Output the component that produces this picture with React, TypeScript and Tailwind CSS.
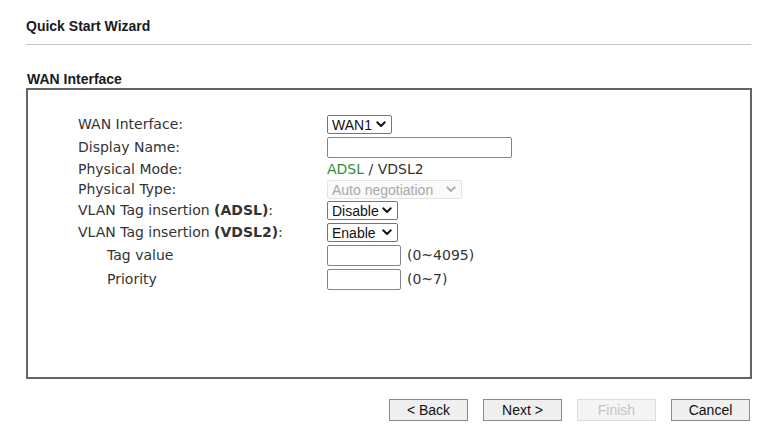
import React from "react";

const Chevron = ({ color = "#111" }: { color?: string }) => (
  <svg width="10" height="7" viewBox="0 0 10 7" className="shrink-0">
    <path d="M1.2 1.3 L5 5 L8.8 1.3" fill="none" stroke={color} strokeWidth="1.9" strokeLinecap="round" strokeLinejoin="round" />
  </svg>
);

const Select = ({ text, w, disabled = false }: { text: string; w: string; disabled?: boolean }) => (
  <div
    className={`${w} h-[19px] flex items-center justify-between pl-[4px] pr-[5px] rounded-[2px] border text-[14px] leading-none ${
      disabled ? "border-[#e3e3e3] text-[#a9a9a9] bg-[#fafafa]" : "border-[#767676] text-[#111] bg-white"
    }`}
    style={{ fontFamily: '"Liberation Sans", Arial, sans-serif' }}
  >
    <span>{text}</span>
    <Chevron color={disabled ? "#b0b0b0" : "#111"} />
  </div>
);

const Input = ({ w }: { w: string }) => (
  <div className={`${w} h-[21px] rounded-[2px] border border-[#858585] bg-white`} />
);

const Row = ({
  label,
  children,
  h,
  mt = "",
  indent = false,
}: {
  label: React.ReactNode;
  children: React.ReactNode;
  h: string;
  mt?: string;
  indent?: boolean;
}) => (
  <div className={`flex items-center ${h} ${mt}`}>
    <div className={`w-[249px] shrink-0 whitespace-nowrap ${indent ? "pl-[29px]" : ""}`}>{label}</div>
    <div className="flex items-center whitespace-nowrap">{children}</div>
  </div>
);

const Btn = ({ text, disabled = false }: { text: string; disabled?: boolean }) => (
  <div
    className={`w-[79px] h-[22px] flex items-center justify-center border text-[14px] ${
      disabled ? "border-[#dcdcdc] bg-[#f4f4f4] text-[#c4c4c4]" : "border-[#8a8a8a] bg-[#efefef] text-[#111]"
    }`}
    style={{ fontFamily: '"Liberation Sans", Arial, sans-serif' }}
  >
    {text}
  </div>
);

export default function App() {
  return (
    <div className="w-[770px] h-[430px] bg-white overflow-hidden">
      <div className="pl-[26px] pr-[18px]" style={{ fontFamily: '"Liberation Sans", Arial, sans-serif' }}>
        <div className="pt-[18px] h-[44px] text-[14px] font-bold text-[#1a1a1a] leading-[16px]">Quick Start Wizard</div>
        <div className="h-px bg-[#c4c4c4] w-[725px]" />
        <div className="pt-[26px] h-[43px] text-[14px] font-bold text-[#1a1a1a] leading-[16px] pl-[1px]">WAN Interface</div>
        <div
          className="w-[726px] h-[291px] border-2 border-[#646464] pt-[25px] pl-[50px] text-[#333]"
          style={{ fontFamily: '"DejaVu Sans", Verdana, sans-serif' }}
        >
          <div className="flex flex-col text-[14px]">
            <Row label="WAN Interface:" h="h-[19px]">
              <Select text="WAN1" w="w-[65px]" />
            </Row>
            <Row label="Display Name:" h="h-[21px]" mt="mt-[3px]">
              <Input w="w-[185px]" />
            </Row>
            <Row label="Physical Mode:" h="h-[22px]">
              <span>
                <span className="text-[#2f8f3a]">ADSL</span> / VDSL2
              </span>
            </Row>
            <Row label="Physical Type:" h="h-[19px]">
              <Select text="Auto negotiation" w="w-[135px]" disabled />
            </Row>
            <Row
              label={
                <span>
                  VLAN Tag insertion <b>(ADSL)</b>:
                </span>
              }
              h="h-[19px]"
              mt="mt-[2px]"
            >
              <Select text="Disable" w="w-[71px]" />
            </Row>
            <Row
              label={
                <span>
                  VLAN Tag insertion <b>(VDSL2)</b>:
                </span>
              }
              h="h-[19px]"
              mt="mt-[3px]"
            >
              <Select text="Enable" w="w-[71px]" />
            </Row>
            <Row label="Tag value" h="h-[21px]" mt="mt-[3px]" indent>
              <Input w="w-[74px]" />
              <span className="ml-[6px]">(0~4095)</span>
            </Row>
            <Row label="Priority" h="h-[21px]" mt="mt-[3px]" indent>
              <Input w="w-[74px]" />
              <span className="ml-[6px]">(0~7)</span>
            </Row>
          </div>
        </div>
        <div className="flex justify-end w-[724px] mt-[20px] gap-[15px]">
          <Btn text="< Back" />
          <Btn text="Next >" />
          <Btn text="Finish" disabled />
          <Btn text="Cancel" />
        </div>
      </div>
    </div>
  );
}
